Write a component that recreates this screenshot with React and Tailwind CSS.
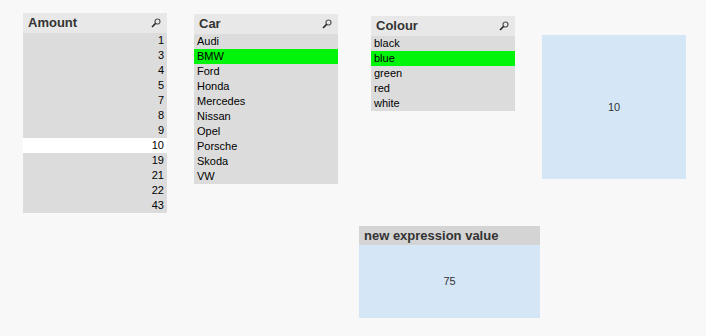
import React from 'react';

const amounts = [1, 3, 4, 5, 7, 8, 9, 10, 19, 21, 22, 43];
const cars = ['Audi', 'BMW', 'Ford', 'Honda', 'Mercedes', 'Nissan', 'Opel', 'Porsche', 'Skoda', 'VW'];
const colours = ['black', 'blue', 'green', 'red', 'white'];

function SearchIcon() {
    return (
        <svg width="10" height="10" viewBox="0 0 10 10" className="shrink-0">
            <circle cx="6.5" cy="3.5" r="2.5" fill="none" stroke="#555" strokeWidth="1.2" />
            <path d="M4.7 5.3 L1 9" stroke="#222" strokeWidth="1.6" />
        </svg>
    );
}

// One QlikView style list box
function ListBox({ title, items, left, top, selected, mode, align }) {
    return (
        <div className="absolute w-[144px] bg-[#dcdcdc]" style={{ left, top }}>
            <div className="flex h-[20px] items-center justify-between bg-[#e8e8e8] pl-[5px] pr-[6px]">
                <span className="text-[13px] font-bold text-[#333]">{title}</span>
                <SearchIcon />
            </div>
            {items.map((item) => {
                const isSel = String(item) === selected;
                let bg = '';
                if (isSel) bg = mode === 'white' ? 'bg-white' : 'bg-[#00f50a]';
                return (
                    <div
                        key={item}
                        className={`flex h-[15px] items-center px-[3px] text-[11px] text-black ${bg} ${align === 'right' ? 'justify-end' : ''}`}
                    >
                        {item}
                    </div>
                );
            })}
        </div>
    );
}

export default function App() {
    return (
        <div className="relative h-[336px] w-[706px] overflow-hidden bg-[#f8f8f8] font-['Liberation_Sans',Arial,sans-serif]">
            <ListBox title="Amount" items={amounts} left={23} top={13} selected="10" mode="white" align="right" />
            <ListBox title="Car" items={cars} left={194} top={14} selected="BMW" />
            <ListBox title="Colour" items={colours} left={371} top={16} selected="blue" />

            {/* text object */}
            <div className="absolute left-[542px] top-[35px] flex h-[144px] w-[144px] items-center justify-center bg-[#d5e6f7] text-[11px] text-[#333]">
                10
            </div>

            {/* expression object */}
            <div className="absolute left-[359px] top-[226px] w-[181px]">
                <div className="flex h-[19px] items-center bg-[#d4d4d4] px-[5px] text-[13px] font-bold text-[#333]">
                    new expression value
                </div>
                <div className="flex h-[73px] items-center justify-center bg-[#d5e6f7] text-[11px] text-[#333]">
                    75
                </div>
            </div>
        </div>
    );
}
